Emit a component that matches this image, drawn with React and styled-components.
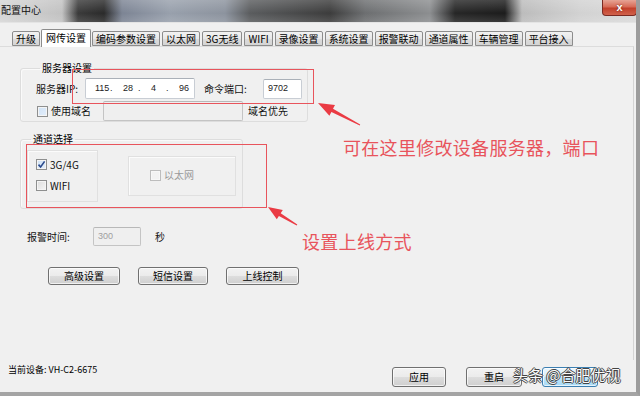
import React from "react";
import styled, { createGlobalStyle } from "styled-components";

const GlobalStyle = createGlobalStyle`
  html, body {
    margin: 0;
    padding: 0;
    background: #f0f0f0;
  }
  body {
    font-family: "Noto Sans CJK SC", "Liberation Sans", sans-serif;
    font-size: 10px;
    color: #000;
  }
`;

const Window = styled.div`
  position: relative;
  width: 640px;
  height: 396px;
  box-sizing: border-box;
  overflow: hidden;
  display: flex;
  flex-direction: column;
  background: #f0f0f0;
  border-right: 4px solid #9c9c9c;
  border-bottom: 4px solid #a4a4a4;
`;

const TitleBar = styled.div`
  position: relative;
  height: 22px;
  flex: none;
  display: flex;
  align-items: flex-start;
  justify-content: space-between;
  background:
    linear-gradient(180deg, rgba(255, 255, 255, 0.18), rgba(255, 255, 255, 0) 60%, rgba(255, 255, 255, 0.12)),
    linear-gradient(
      90deg,
      #d6d6d6 0,
      #c2c2c2 62px,
      #3a3a3a 78px,
      #2a2a2a 104px,
      #7c8494 122px,
      #98a0ac 170px,
      #8c939e 225px,
      #5a5c5e 250px,
      #3c3c3c 330px,
      #6c6e70 365px,
      #8c8e90 430px,
      #262626 455px,
      #1c1c1c 505px,
      #bcbcbc 522px,
      #d2d2d2 580px,
      #dadada 640px
    );
  border-bottom: 1px solid #e4e4e4;
`;

const Title = styled.span`
  padding: 4px 0 0 1px;
  font-size: 10px;
  line-height: 12px;
  color: #111;
`;

const CloseButton = styled.div`
  width: 35px;
  height: 16px;
  margin-right: -1px;
  border: 1px solid #7a2a22;
  border-top: none;
  border-radius: 0 0 4px 4px;
  box-sizing: border-box;
  background: linear-gradient(180deg, #e6a495 0, #d76b57 45%, #c2402b 55%, #d0624c 100%);
  color: #fff;
  font: bold 11px/14px "Liberation Sans", sans-serif;
  text-align: center;
  text-shadow: 0 0 2px #5a1a10;
`;

const Client = styled.div`
  flex: 1;
  display: flex;
  flex-direction: column;
  padding: 5px 0 0 0;
`;

const TabStrip = styled.div`
  display: flex;
  align-items: flex-end;
  gap: 2px;
  height: 18px;
  padding-left: 12px;
`;

const Tab = styled.div`
  box-sizing: border-box;
  height: ${(p) => (p.$active ? "18px" : "15px")};
  margin: ${(p) => (p.$active ? "0 -1px -1px -1px" : "0")};
  padding: ${(p) => (p.$active ? "2px 4px 0" : "1px 3px 0")};
  border: 1px solid #8c8c8c;
  border-bottom: ${(p) => (p.$active ? "none" : "1px solid #8c8c8c")};
  border-radius: 2px 2px 0 0;
  background: ${(p) =>
    p.$active ? "#fff" : "linear-gradient(180deg, #f2f2f2 0, #e8e8e8 50%, #dcdcdc 51%, #d4d4d4 100%)"};
  font-size: 10px;
  line-height: 12px;
  white-space: nowrap;
  position: relative;
  z-index: ${(p) => (p.$active ? 1 : 0)};
`;

const Panel = styled.div`
  flex: 1;
  display: flex;
  flex-direction: column;
  align-items: flex-start;
  margin-right: 2px;
  padding-left: 20px;
  border-top: 1px solid #dcdcdc;
  border-right: 1px solid #d4d4d4;
`;

const Group = styled.fieldset`
  box-sizing: border-box;
  width: ${(p) => p.$width}px;
  margin: ${(p) => p.$top}px 0 0 0;
  padding: ${(p) => p.$pad};
  border: 1px solid #dddddd;
  border-radius: 3px;
  box-shadow: inset 1px 1px 0 #fafafa;
  min-inline-size: 0;
`;

const Legend = styled.legend`
  padding: 0 2px;
  margin-left: 4px;
  font-size: 10px;
  line-height: 12px;
`;

const Row = styled.div`
  display: flex;
  align-items: center;
  height: ${(p) => p.$h || 20}px;
  margin-top: ${(p) => p.$mt || 0}px;
  margin-left: ${(p) => p.$ml || 0}px;
`;

const Label = styled.span`
  flex: none;
  width: ${(p) => (p.$w ? `${p.$w}px` : "auto")};
  margin-left: ${(p) => p.$ml || 0}px;
  font-size: 10px;
  line-height: 12px;
  color: ${(p) => (p.$disabled ? "#9a9a9a" : "#111")};
  white-space: nowrap;
`;

const TextBox = styled.div`
  box-sizing: border-box;
  flex: none;
  width: ${(p) => p.$w}px;
  height: ${(p) => p.$h}px;
  padding: 3px 4px 0;
  border: 1px solid ${(p) => (p.$disabled ? "#c4c4c4" : "#c8cdd4")};
  border-top-color: ${(p) => (p.$disabled ? "#b8b8b8" : "#aab0b8")};
  border-radius: 2px;
  background: ${(p) => (p.$disabled ? "#efefef" : "#fff")};
  color: ${(p) => (p.$disabled ? "#a0a0a0" : "#222")};
  font-family: "Liberation Sans", sans-serif;
  font-size: 9px;
  line-height: 11px;
`;

const IpBox = styled(TextBox)`
  display: flex;
  align-items: center;
  padding: 0 0 0 9px;
`;

const IpPart = styled.span`
  width: 15px;
  text-align: left;
`;

const IpDot = styled.span`
  width: 13px;
  text-align: left;
`;

const Check = styled.span`
  box-sizing: border-box;
  flex: none;
  display: inline-flex;
  align-items: center;
  justify-content: center;
  width: 11px;
  height: 11px;
  margin-left: ${(p) => p.$ml || 0}px;
  margin-right: 3px;
  border: 1px solid ${(p) => (p.$disabled ? "#bdbdbd" : "#8e8f8f")};
  background: ${(p) =>
    p.$disabled
      ? "#f2f2f2"
      : p.$tint
      ? "linear-gradient(135deg, #cfe2f6 0, #e4eefa 100%)"
      : "linear-gradient(135deg, #dcdcdc 0, #f6f6f6 100%)"};
  box-shadow: inset 0 0 0 1px ${(p) => (p.$disabled ? "#f7f7f7" : "#f4f4f4")};
`;

const Tick = styled.svg`
  width: 9px;
  height: 9px;
`;

const SubPanel = styled.div`
  box-sizing: border-box;
  width: ${(p) => p.$w}px;
  height: ${(p) => p.$h}px;
  display: flex;
  flex-direction: ${(p) => (p.$column ? "column" : "row")};
  align-items: ${(p) => (p.$column ? "flex-start" : "center")};
  gap: 10px;
  padding: ${(p) => p.$pad};
  border: 1px solid #e0e0e0;
  box-shadow: 1px 1px 0 #fbfbfb inset;
`;

const ChannelRow = styled.div`
  display: flex;
  align-items: center;
  gap: 30px;
`;

const ButtonRow = styled.div`
  display: flex;
  gap: ${(p) => p.$gap}px;
  margin-top: ${(p) => p.$mt || 0}px;
  margin-left: ${(p) => p.$ml || 0}px;
`;

const Button = styled.div`
  box-sizing: border-box;
  width: ${(p) => p.$w}px;
  height: ${(p) => p.$h || 18}px;
  display: flex;
  align-items: center;
  justify-content: center;
  border: 1px solid ${(p) => (p.$focus ? "#3c7fb1" : "#707070")};
  border-radius: 3px;
  background: ${(p) =>
    p.$focus
      ? "linear-gradient(180deg, #eaf6fd 0, #d9f0fc 50%, #bee6fd 51%, #a7d9f5 100%)"
      : "linear-gradient(180deg, #f2f2f2 0, #ebebeb 50%, #dddddd 51%, #cfcfcf 100%)"};
  box-shadow: inset 0 0 0 1px rgba(255, 255, 255, 0.7);
  font-size: 10px;
  line-height: 12px;
`;

const Footer = styled.div`
  display: flex;
  align-items: flex-start;
  padding: 0 0 5px 8px;
`;

const DeviceInfo = styled.span`
  margin-top: 4px;
  font-size: 9px;
  line-height: 11px;
  flex: 1;
`;

const FooterButtons = styled(ButtonRow)`
  margin-top: 7px;
  margin-right: 38px;
`;

/* annotations drawn over the screenshot */
const Overlay = styled.svg`
  position: absolute;
  left: 0;
  top: 0;
  width: 640px;
  height: 396px;
  pointer-events: none;
`;

const Note = styled.div`
  position: absolute;
  left: ${(p) => p.$x}px;
  top: ${(p) => p.$y}px;
  font-size: 18px;
  line-height: 20px;
  color: #e8545c;
  letter-spacing: 0.3px;
  white-space: nowrap;
`;

const Watermark = styled.div`
  position: absolute;
  left: 513px;
  top: 366px;
  font-size: 15px;
  line-height: 18px;
  color: #fafafa;
  white-space: nowrap;
  text-shadow: -1px 0 0 #444, 1px 0 0 #444, 0 -1px 0 #444, 0 1px 0 #444;
`;

const tabs = [
  "升级",
  "网传设置",
  "编码参数设置",
  "以太网",
  "3G无线",
  "WIFI",
  "录像设置",
  "系统设置",
  "报警联动",
  "通道属性",
  "车辆管理",
  "平台接入",
];

function Checkbox({ checked, disabled, tint, ml }) {
  return (
    <Check $disabled={disabled} $tint={tint} $ml={ml}>
      {checked && (
        <Tick viewBox="0 0 9 9">
          <path d="M1.5 4.6 L3.6 7 L7.6 1.4" fill="none" stroke="#2b4a8c" strokeWidth="1.6" />
        </Tick>
      )}
    </Check>
  );
}

export default function App() {
  return (
    <>
      <GlobalStyle />
      <Window>
        <TitleBar>
          <Title>配置中心</Title>
          <CloseButton>x</CloseButton>
        </TitleBar>
        <Client>
          <TabStrip>
            {tabs.map((t) => (
              <Tab key={t} $active={t === "网传设置"}>
                {t}
              </Tab>
            ))}
          </TabStrip>
          <Panel>
            <Group $width={288} $top={15} $pad="4px 0 0 15px">
              <Legend>服务器设置</Legend>
              <Row $h={21}>
                <Label $w={49}>服务器IP:</Label>
                <IpBox $w={110} $h={21}>
                  <IpPart>115</IpPart>
                  <IpDot>.</IpDot>
                  <IpPart>28</IpPart>
                  <IpDot>.</IpDot>
                  <IpPart>4</IpPart>
                  <IpDot>.</IpDot>
                  <IpPart>96</IpPart>
                </IpBox>
                <Label $w={59} $ml={9}>命令端口:</Label>
                <TextBox $w={39} $h={20}>9702</TextBox>
              </Row>
              <Row $h={20} $mt={2}>
                <Checkbox tint ml={1} />
                <Label $w={52}>使用域名</Label>
                <TextBox $w={140} $h={20} $disabled />
                <Label $ml={5}>域名优先</Label>
              </Row>
            </Group>

            <Group $width={223} $top={11} $pad="5px 0 6px 6px">
              <Legend>通道选择</Legend>
              <ChannelRow>
                <SubPanel $w={71} $h={52} $column $pad="8px 0 0 8px">
                  <Row $h={11}>
                    <Checkbox checked tint />
                    <Label>3G/4G</Label>
                  </Row>
                  <Row $h={11}>
                    <Checkbox />
                    <Label>WIFI</Label>
                  </Row>
                </SubPanel>
                <SubPanel $w={108} $h={40} $pad="0 0 2px 21px">
                  <Row $h={11}>
                    <Checkbox disabled />
                    <Label $disabled>以太网</Label>
                  </Row>
                </SubPanel>
              </ChannelRow>
            </Group>

            <Row $h={19} $mt={18} $ml={7}>
              <Label $w={66}>报警时间:</Label>
              <TextBox $w={48} $h={19} $disabled>300</TextBox>
              <Label $ml={14}>秒</Label>
            </Row>

            <ButtonRow $gap={18} $mt={21} $ml={28}>
              <Button $w={72}>高级设置</Button>
              <Button $w={70}>短信设置</Button>
              <Button $w={73}>上线控制</Button>
            </ButtonRow>
          </Panel>
          <Footer>
            <DeviceInfo>当前设备: VH-C2-6675</DeviceInfo>
            <FooterButtons $gap={20}>
              <Button $w={54} $h={20}>应用</Button>
              <Button $w={56} $h={20}>重启</Button>
              <Button $w={56} $h={20} $focus />
            </FooterButtons>
          </Footer>
        </Client>

        <Overlay viewBox="0 0 640 396">
          <rect x="72.5" y="69.5" width="241" height="34" fill="none" stroke="#e8545c" strokeWidth="1" />
          <rect x="26.5" y="144.5" width="240" height="63" fill="none" stroke="#e8545c" strokeWidth="1" />
          <polygon
            points="318,103 335,105.1 333,108.8 360.2,124.6 359.8,125.4 331.4,112 329.4,115.7"
            fill="#ea3b44"
          />
          <polygon
            points="268,207 282.8,210 280.7,213.3 297.3,224.6 296.7,225.4 278.9,215.9 276.8,219.2"
            fill="#ea3b44"
          />
        </Overlay>
        <Note $x={343} $y={137}>可在这里修改设备服务器，端口</Note>
        <Note $x={302} $y={231}>设置上线方式</Note>
        <Watermark>头条 @合肥优视</Watermark>
      </Window>
    </>
  );
}
